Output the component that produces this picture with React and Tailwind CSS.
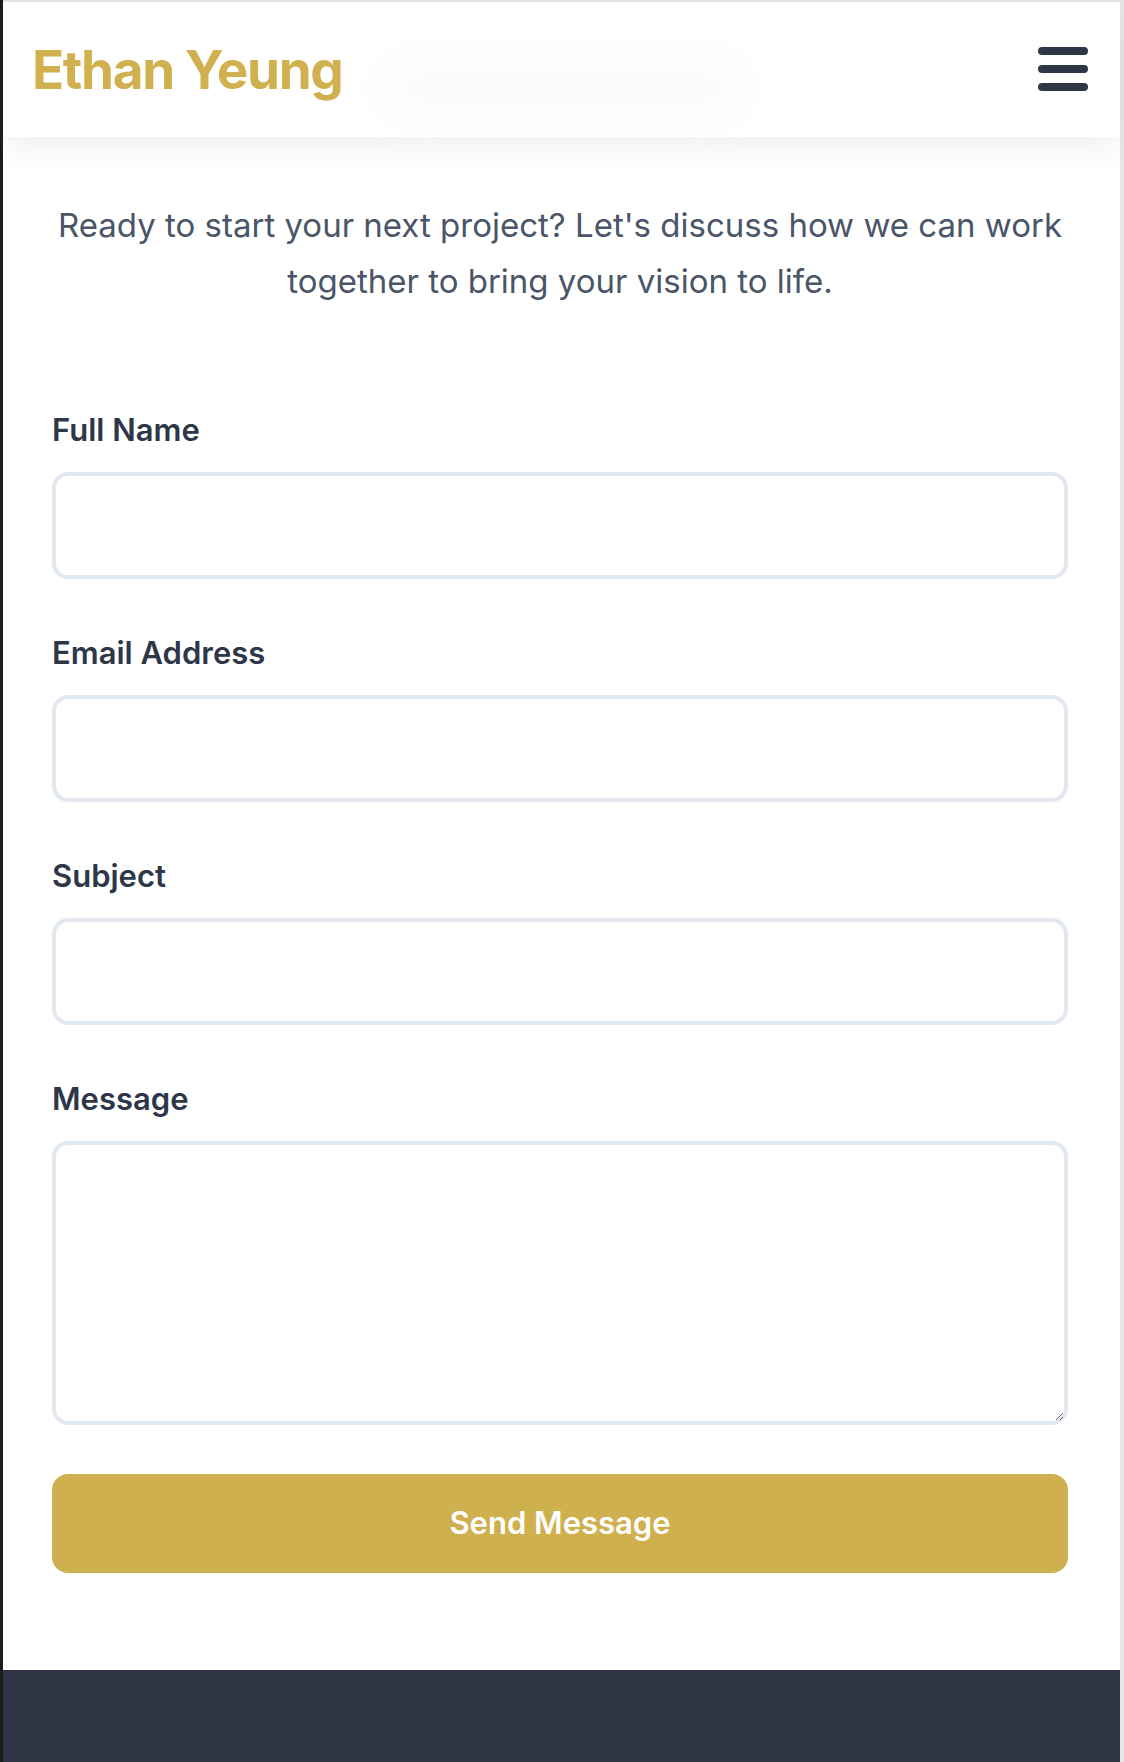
export default function App() {
  const fields = [
    { label: "Full Name", type: "input" },
    { label: "Email Address", type: "input" },
    { label: "Subject", type: "input" },
  ];
  return (
    <div className="w-[1124px] h-[1762px] flex bg-white overflow-hidden font-['Inter','Noto_Sans',sans-serif]">
      <div className="w-[3px] bg-[#1e1d1c] shrink-0" />
      <div className="flex-1 flex flex-col min-w-0">
        <div className="h-[2px] bg-[#e4e4e4]" />
        <header className="relative z-10 h-[135px] bg-white flex items-center justify-between pl-[29px] pr-8 shadow-[0_12px_30px_rgba(0,0,0,0.06)]">
          <div className="text-[53px] leading-none font-bold tracking-tight text-[#d1b04f] mt-[2px]">
            Ethan Yeung
          </div>
          <div className="absolute left-[370px] top-[50px] w-[380px] h-[72px] rounded-full bg-[#f9f9f9] blur-lg opacity-60" />
          <button className="relative flex flex-col gap-[10px] mb-[2px]" aria-label="Menu">
            <span className="block w-[50px] h-[8px] rounded-full bg-[#2d3748]" />
            <span className="block w-[50px] h-[8px] rounded-full bg-[#2d3748]" />
            <span className="block w-[50px] h-[8px] rounded-full bg-[#2d3748]" />
          </button>
        </header>
        <main className="pl-[49px] pr-[52px] pt-[60px] pb-[97px] bg-white">
          <p className="text-center text-[33px] leading-[56px] text-[#4a5568] -mx-[8px]">
            Ready to start your next project? Let's discuss how we can work together to bring your vision to life.
          </p>
          <form className="mt-[97px] flex flex-col gap-[50px]" onSubmit={(e) => e.preventDefault()}>
            {fields.map((f) => (
              <div key={f.label} className="flex flex-col">
                <label className="text-[31px] leading-[48px] font-semibold text-[#2d3748] mb-[18px]">
                  {f.label}
                </label>
                <input className="w-full h-[107px] rounded-[16px] border-[4px] border-[#e2e8f0] bg-white outline-none" />
              </div>
            ))}
            <div className="flex flex-col">
              <label className="text-[31px] leading-[48px] font-semibold text-[#2d3748] mb-[18px]">
                Message
              </label>
              <textarea className="w-full h-[284px] rounded-[16px] border-[4px] border-[#e2e8f0] bg-white outline-none" />
            </div>
          </form>
          <button className="mt-[49px] w-full h-[99px] rounded-[16px] bg-[#ceb04e] text-white text-[31px] font-semibold">
            Send Message
          </button>
        </main>
        <footer className="h-[92px] bg-[#2e3444] shrink-0" />
      </div>
      <div className="w-[4px] bg-[#e6e6e6] shrink-0" />
    </div>
  );
}
